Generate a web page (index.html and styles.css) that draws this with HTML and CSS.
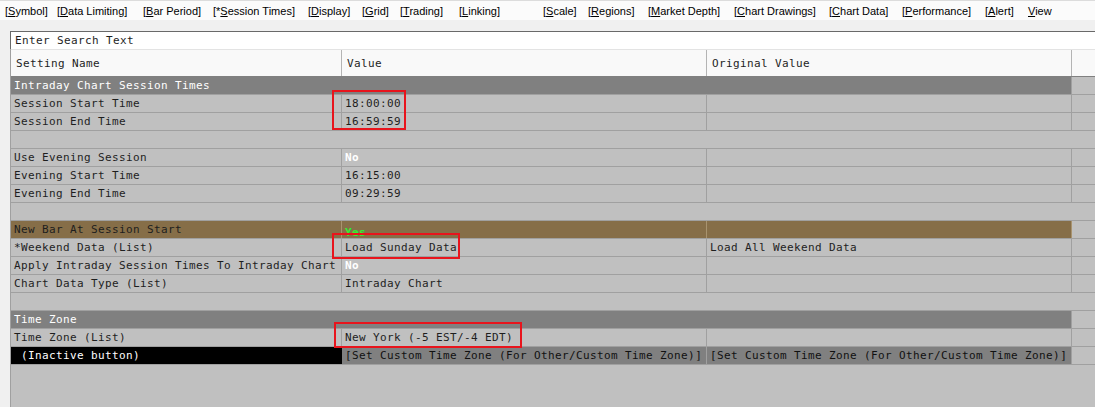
FILE: index.html
```html
<!DOCTYPE html>
<html lang="en">
<head>
    <meta charset="UTF-8">
    <title>Chart Settings - Session Times</title>
    <link rel="stylesheet" href="styles.css">
</head>
<body>
    <div class="window">
        <nav class="tabs">
            <span class="tab">[<u>S</u>ymbol]</span>
            <span class="tab">[<u>D</u>ata Limiting]</span>
            <span class="tab">[<u>B</u>ar Period]</span>
            <span class="tab">[*<u>S</u>ession Times]</span>
            <span class="tab">[<u>D</u>isplay]</span>
            <span class="tab">[<u>G</u>rid]</span>
            <span class="tab">[<u>T</u>rading]</span>
            <span class="tab">[<u>L</u>inking]</span>
            <span class="tab">[<u>S</u>cale]</span>
            <span class="tab">[<u>R</u>egions]</span>
            <span class="tab">[<u>M</u>arket Depth]</span>
            <span class="tab">[<u>C</u>hart Drawings]</span>
            <span class="tab">[<u>C</u>hart Data]</span>
            <span class="tab">[<u>P</u>erformance]</span>
            <span class="tab">[<u>A</u>lert]</span>
            <span class="tab"><u>V</u>iew</span>
        </nav>

        <div class="search">
            <input type="text" placeholder="Enter Search Text">
        </div>

        <div class="grid">
            <div class="row head">
                <div class="cell">Setting Name</div>
                <div class="cell">Value</div>
                <div class="cell">Original Value</div>
                <div class="cell"></div>
            </div>

            <div class="row section">
                <div class="cell wide">Intraday Chart Session Times</div>
                <div class="cell"></div>
            </div>
            <div class="row">
                <div class="cell">Session Start Time</div>
                <div class="cell">18:00:00</div>
                <div class="cell"></div>
                <div class="cell"></div>
            </div>
            <div class="row">
                <div class="cell">Session End Time</div>
                <div class="cell">16:59:59</div>
                <div class="cell"></div>
                <div class="cell"></div>
            </div>
            <div class="row blank"></div>

            <div class="row">
                <div class="cell">Use Evening Session</div>
                <div class="cell flag-no">No</div>
                <div class="cell"></div>
                <div class="cell"></div>
            </div>
            <div class="row">
                <div class="cell">Evening Start Time</div>
                <div class="cell">16:15:00</div>
                <div class="cell"></div>
                <div class="cell"></div>
            </div>
            <div class="row">
                <div class="cell">Evening End Time</div>
                <div class="cell">09:29:59</div>
                <div class="cell"></div>
                <div class="cell"></div>
            </div>
            <div class="row blank"></div>

            <div class="row changed">
                <div class="cell">New Bar At Session Start</div>
                <div class="cell flag-yes">Yes</div>
                <div class="cell"></div>
                <div class="cell"></div>
            </div>
            <div class="row">
                <div class="cell">*Weekend Data (List)</div>
                <div class="cell">Load Sunday Data</div>
                <div class="cell">Load All Weekend Data</div>
                <div class="cell"></div>
            </div>
            <div class="row">
                <div class="cell">Apply Intraday Session Times To Intraday Chart</div>
                <div class="cell flag-no">No</div>
                <div class="cell"></div>
                <div class="cell"></div>
            </div>
            <div class="row">
                <div class="cell">Chart Data Type (List)</div>
                <div class="cell">Intraday Chart</div>
                <div class="cell"></div>
                <div class="cell"></div>
            </div>
            <div class="row blank"></div>

            <div class="row section">
                <div class="cell wide">Time Zone</div>
                <div class="cell"></div>
            </div>
            <div class="row">
                <div class="cell">Time Zone (List)</div>
                <div class="cell">New York (-5 EST/-4 EDT)</div>
                <div class="cell"></div>
                <div class="cell"></div>
            </div>
            <div class="row button">
                <div class="cell">(Inactive button)</div>
                <div class="cell">[Set Custom Time Zone (For Other/Custom Time Zone)]</div>
                <div class="cell">[Set Custom Time Zone (For Other/Custom Time Zone)]</div>
                <div class="cell"></div>
            </div>
        </div>

        <!-- red outlines drawn over the edited values -->
        <div class="mark mark-session"></div>
        <div class="mark mark-weekend"></div>
        <div class="mark mark-zone"></div>
    </div>
</body>
</html>
```

FILE: styles.css
```css
body {
    margin: 0;
    background-color: #f0f0f0;
    color: #1e1e1e;
}

.window {
    position: relative;
    height: 100vh;
    display: flex;
    flex-direction: column;
    overflow: hidden;
}

/* tab strip */
.tabs {
    display: grid;
    grid-template-columns: 52px 86px 70px 95px 54px 38px 59px 84px 45px 60px 86px 95px 73px 83px 43px 1fr;
    height: 20px;
    box-sizing: border-box;
    padding: 3px 0 0 5px;
    background-color: #fbfbfb;
    border-top: 1px solid #dcdcdc;
    font-family: "Liberation Sans", Arial, sans-serif;
    font-size: 11px;
    line-height: 15px;
    color: #000;
}

.tab {
    white-space: nowrap;
}

/* search box */
.search {
    margin: 11px 0 0 10px;
}

.search input {
    display: block;
    width: 100%;
    height: 19px;
    box-sizing: border-box;
    margin: 0;
    padding: 0 4px;
    border: none;
    border-top: 1px solid #696969;
    border-left: 1px solid #696969;
    border-bottom: 1px solid #e3e3e3;
    background-color: #fff;
    font-family: "DejaVu Sans Mono", monospace;
    font-size: 11px;
    letter-spacing: 0.38px;
    outline: none;
}

.search input::placeholder {
    color: #1e1e1e;
    opacity: 1;
}

/* settings grid */
.grid {
    flex: 1;
    margin-left: 10px;
    border-left: 1px solid #a0a0a0;
    background-color: #c0c0c0;
    font-family: "DejaVu Sans Mono", monospace;
    font-size: 11px;
    letter-spacing: 0.38px;
}

.row {
    display: grid;
    grid-template-columns: 331px 365px 365px 1fr;
    height: 18px;
    box-sizing: border-box;
    border-bottom: 1px solid #a0a0a0;
}

.cell {
    padding: 0 3px;
    line-height: 17px;
    white-space: nowrap;
    overflow: hidden;
    border-right: 1px solid #a0a0a0;
}

.cell:last-child {
    border-right: none;
}

.row.head {
    height: 27px;
    background-color: #f9f9f9;
    border-bottom-color: #808080;
}

.row.head .cell {
    padding: 2px 5px 0;
    line-height: 24px;
    border-right-color: #b4b4b4;
}

.row.section .wide {
    grid-column: span 3;
    background-color: #808080;
    color: #fff;
}

.row.changed .cell {
    background-color: #866e48;
    border-right-color: #a8936f;
}

.row.changed .cell:last-child {
    background-color: #c0c0c0;
}

.row.button .cell {
    background-color: #808080;
    color: #111;
}

.row.button .cell:first-child {
    background-color: #000;
    color: #fff;
    padding-left: 10px;
    border-right-color: #000;
}

.row.button .cell:last-child {
    background-color: #c0c0c0;
}

.flag-no {
    color: #fff;
    font-weight: bold;
}

.flag-yes {
    color: #33ee33;
    font-weight: bold;
    padding-top: 3px;
}

/* highlight outlines */
.mark {
    position: absolute;
    box-sizing: border-box;
    border: 2px solid #e8141c;
}

.mark-session {
    left: 332px;
    top: 90px;
    width: 74px;
    height: 40px;
}

.mark-weekend {
    left: 332px;
    top: 233px;
    width: 128px;
    height: 26px;
}

.mark-zone {
    left: 334px;
    top: 322px;
    width: 188px;
    height: 26px;
}
```
